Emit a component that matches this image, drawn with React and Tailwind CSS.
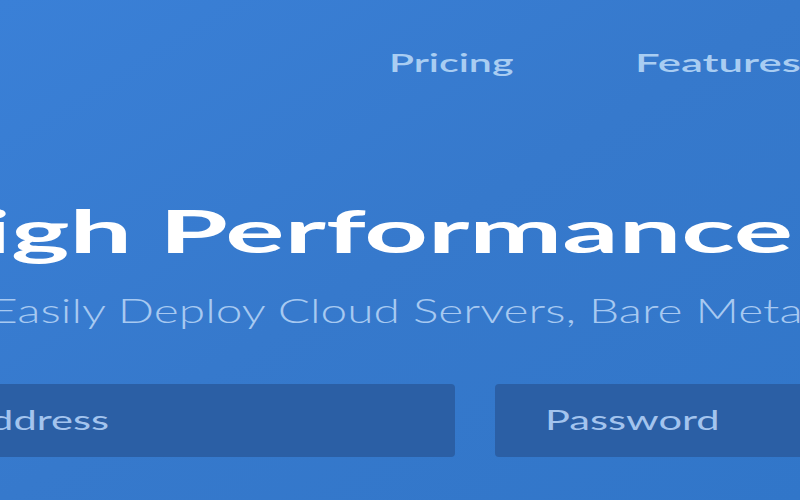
export default function App() {
  return (
    <div className="w-[800px] h-[500px] overflow-hidden bg-gradient-to-br from-[#3a80d7] via-[#3679cc] to-[#3176c9] font-['Lato','Noto_Sans',sans-serif]">
      {/* Top nav */}
      <nav className="flex pl-[389px] pt-[45px] text-[24px] leading-[36px] font-semibold text-[#a9cdf2] whitespace-nowrap">
        <a className="w-[246px] shrink-0">
          <span className="inline-block origin-left scale-x-[1.71]">Pricing</span>
        </a>
        <a className="w-[283px] shrink-0">
          <span className="inline-block origin-left scale-x-[1.82]">Features</span>
        </a>
        <a className="shrink-0">
          <span className="inline-block origin-left scale-x-[1.75]">Network</span>
        </a>
      </nav>

      {/* Hero */}
      <div className="mt-[113px] whitespace-nowrap">
        <h1 className="ml-[-102px] text-[60px] leading-[72px] font-bold text-white">
          <span className="inline-block origin-left scale-x-[1.85]">High Performance SSD Cloud</span>
        </h1>
        <p className="mt-[24px] ml-[-10px] text-[33px] leading-[40px] font-light text-[#a7c9f1]">
          <span className="inline-block origin-left scale-x-[1.45]">
            Easily Deploy Cloud Servers, Bare Metal, and Storage Worldwide!
          </span>
        </p>
      </div>

      {/* Sign up form */}
      <form className="mt-[54px] ml-[-195px] flex gap-[40px]">
        <div className="w-[650px] h-[73px] shrink-0 rounded-[4px] bg-[#2b5fa5] flex items-center pl-[50px] text-[26px] text-[#a3c4ee] whitespace-nowrap">
          <span className="inline-block origin-left scale-x-[1.6]">Email Address</span>
        </div>
        <div className="w-[400px] h-[73px] shrink-0 rounded-[4px] bg-[#2b5fa5] flex items-center pl-[50px] text-[26px] text-[#a3c4ee] whitespace-nowrap">
          <span className="inline-block origin-left scale-x-[1.6]">Password</span>
        </div>
      </form>
    </div>
  );
}
